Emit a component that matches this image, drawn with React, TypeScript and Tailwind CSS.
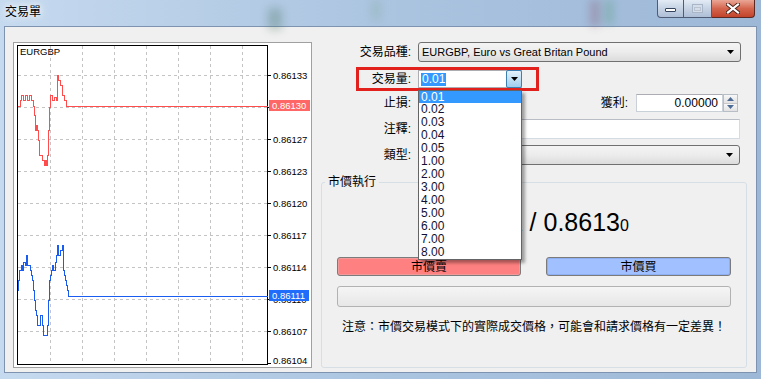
import React from 'react'

const font = "font-['Liberation_Sans','Noto_Sans_CJK_TC',sans-serif]"

const gridY = [75, 107, 139, 171, 203, 235, 267, 299, 331]
const gridX = [50, 82, 114, 146, 178, 210, 242]

const axisLabels = [
  { y: 75, t: '0.86133' },
  { y: 139, t: '0.86127' },
  { y: 171, t: '0.86123' },
  { y: 203, t: '0.86120' },
  { y: 235, t: '0.86117' },
  { y: 267, t: '0.86114' },
  { y: 299, t: '0.86110' },
  { y: 331, t: '0.86107' },
]

const askPath =
  'M17 106 H20 V100 H21 V95 H23 V100 H25 V95 H27 V100 H29 V95 H31 V100 H33 V106 H34 V115 H35 V130 H36 V125 H37 V130 H38 V140 H39 V155 H42 V160 H44 V165 H45 V160 H46 V165 H47 V155 H48 V130 H49 V107 H50 V95 H52 V100 H54 V97 H56 V100 H57 V75 H58 V80 H60 V85 H62 V95 H64 V100 H66 V106 H267'

const bidPath =
  'M17 290 H18 V280 H19 V270 H21 V265 H22 V270 H23 V262 H25 V265 H26 V255 H27 V265 H30 V270 H31 V275 H32 V280 H33 V290 H34 V300 H35 V310 H36 V315 H37 V325 H40 V315 H42 V325 H43 V335 H47 V325 H48 V300 H49 V280 H50 V275 H51 V270 H52 V265 H53 V270 H55 V262 H56 V255 H57 V245 H58 V255 H60 V250 H62 V245 H63 V270 H64 V275 H65 V280 H66 V285 H67 V290 H68 V296 H267'

const lots = ['0.01', '0.02', '0.03', '0.04', '0.05', '1.00', '2.00', '3.00', '4.00', '5.00', '6.00', '7.00', '8.00']

const Arrow = () => (
  <svg width="7" height="4" viewBox="0 0 7 4">
    <path d="M0 0h7L3.5 4z" fill="#000" />
  </svg>
)

const Chart = () => (
  <div className="mt-[15px] ml-[8px] w-[299px] h-[326px] border border-[#a0a0a0] bg-white shrink-0">
    <svg width={297} height={324} viewBox="14 43 297 324" fontFamily="Liberation Sans, sans-serif">
      <g shapeRendering="crispEdges">
        {gridY.map((y) => (
          <line key={'h' + y} x1={18} x2={267} y1={y + 0.5} y2={y + 0.5} stroke="#c4c4c4" strokeDasharray="3 3" />
        ))}
        {gridX.map((x) => (
          <line key={'v' + x} x1={x + 0.5} x2={x + 0.5} y1={46} y2={364} stroke="#c4c4c4" strokeDasharray="3 3" />
        ))}
        <rect x={17.5} y={45.5} width={250} height={319} fill="none" stroke="#000" />
        {[...gridY, 363].map((y) => (
          <line key={'t' + y} x1={267} x2={271} y1={y + 0.5} y2={y + 0.5} stroke="#000" />
        ))}
      </g>
      <text x={20} y={55} fontSize={9.5} fill="#000">EURGBP</text>
      {axisLabels.map((l) => (
        <text key={l.t} x={273} y={l.y + 4} fontSize={9.5} fill="#000">{l.t}</text>
      ))}
      <text x={273} y={364} fontSize={9.5} fill="#000">0.86104</text>
      <g transform="translate(0.5 0.5)" shapeRendering="crispEdges" fill="none" strokeWidth={1}>
        <path d={askPath} stroke="#ff4d4d" />
        <path d={bidPath} stroke="#1a5cf0" />
      </g>
      <rect x={269} y={100} width={41} height={11} fill="#ff6666" />
      <text x={272} y={109} fontSize={9.5} fill="#fff">0.86130</text>
      <rect x={269} y={290} width={40} height={11} fill="#1f6dfa" />
      <text x={272} y={299} fontSize={9.5} fill="#fff">0.86111</text>
    </svg>
  </div>
)

const Label = ({ children, className }: { children: React.ReactNode; className: string }) => (
  <div className={'text-right text-[12px] leading-[16px] shrink-0 ' + className}>{children}</div>
)

export default function App() {
  return (
    <div className={`w-[761px] h-[379px] overflow-hidden relative flex flex-col bg-gradient-to-r from-[#c6daef] via-[#abc4e0] to-[#9db8d7] text-black ${font}`}>
      {/* blurred desktop behind the glass */}
      <div className="absolute left-[268px] top-[8px] w-[14px] h-[22px] bg-[#3f6a52] opacity-30 blur-[5px]" />
      <div className="absolute left-[372px] top-[0px] w-[8px] h-[20px] bg-[#6fa07a] opacity-25 blur-[4px]" />
      <div className="absolute left-[590px] top-[0px] w-[10px] h-[26px] bg-[#8a5a70] opacity-35 blur-[4px]" />
      <div className="absolute left-[605px] top-[0px] w-[8px] h-[24px] bg-[#4f9a70] opacity-35 blur-[4px]" />

      {/* title bar */}
      <div className="h-[26px] flex items-start justify-between relative shrink-0">
        <span className="mt-[4px] ml-[5px] text-[12px] leading-[16px] [text-shadow:0_0_6px_#ffffff,0_0_10px_#ffffff]">交易單</span>
        <div className="flex mr-[6px]">
          <div className="w-[27px] h-[18px] rounded-bl-[4px] border border-t-0 border-[#4e5d75] bg-gradient-to-b from-[#e3ebf5] via-[#c6d3e4] to-[#aebfd6] flex items-center justify-center">
            <div className="w-[11px] h-[4px] mt-[3px] bg-white border border-[#34445c] rounded-[1px]" />
          </div>
          <div className="w-[28px] h-[18px] border-b border-r border-[#4e5d75] bg-gradient-to-b from-[#e3ebf5] via-[#c6d3e4] to-[#aebfd6] flex items-center justify-center">
            <div className="w-[11px] h-[9px] border border-[#a9b6c8] bg-[#d5dde8] flex items-center justify-center">
              <div className="w-[7px] h-[4px] border border-[#b9c4d3]" />
            </div>
          </div>
          <div className="w-[43px] h-[18px] rounded-br-[4px] border border-t-0 border-l-0 border-[#5a2a22] bg-gradient-to-b from-[#e9a696] via-[#d4654d] to-[#c2432b] flex items-center justify-center">
            <svg width="14" height="11" viewBox="0 0 14 11">
              <path d="M2 1.5L12 9.5M12 1.5L2 9.5" stroke="#4a2018" strokeWidth="4" strokeLinecap="square" />
              <path d="M2 1.5L12 9.5M12 1.5L2 9.5" stroke="#ffffff" strokeWidth="2.2" strokeLinecap="square" />
            </svg>
          </div>
        </div>
      </div>

      {/* client area */}
      <div className="mx-[4px] mb-[6px] flex-1 bg-[#f0f0f0] border border-[#7d93b0] flex items-start">
        <Chart />

        <div className="ml-[9px] mt-[15px] w-[426px] flex flex-col">
          {/* symbol */}
          <div className="h-[20px] flex items-center">
            <Label className="w-[90px]">交易品種:</Label>
            <div className="ml-[7px] w-[323px] h-[20px] rounded-[3px] border border-[#707070] bg-gradient-to-b from-[#f4f4f4] via-[#ececec] to-[#dcdcdc] flex items-center justify-between pl-[3px] pr-[6px]">
              <span className="text-[11px] leading-[14px]">EURGBP, Euro vs Great Britan Pound</span>
              <Arrow />
            </div>
          </div>

          {/* volume, highlighted */}
          <div className="mt-[5px] ml-[35px] w-[183px] h-[24px] border-[3px] border-[#e3211c] flex items-center relative">
            <Label className="w-[52px]">交易量:</Label>
            <div className="ml-[7px] w-[104px] h-[18px] bg-white border border-[#abadb3] border-r-0 flex items-center">
              <span className="ml-[2px] px-[1px] bg-[#3399ff] text-white text-[12px] leading-[13px]">0.01</span>
              <div className="ml-auto w-[16px] h-[18px] border border-[#3c7fb1] rounded-[2px] bg-gradient-to-b from-[#e4f2fc] via-[#c2e0f5] to-[#9fcdee] flex items-center justify-center">
                <Arrow />
              </div>
            </div>
            {/* open drop list */}
            <div className="absolute left-[59px] top-[20px] w-[104px] bg-white border border-[#646464] shadow-[3px_3px_3px_rgba(0,0,0,0.35)] z-10 flex flex-col">
              {lots.map((v, i) => (
                <div
                  key={v}
                  className={
                    i === 0
                      ? 'h-[12px] pl-[2px] bg-[#3399ff] text-white text-[12px] leading-[12px]'
                      : 'h-[13px] pl-[2px] text-[#111133] text-[12px] leading-[13px]'
                  }
                >
                  {v}
                </div>
              ))}
            </div>
          </div>

          {/* SL / TP */}
          <div className="mt-[3px] h-[18px] flex items-center">
            <Label className="w-[90px]">止損:</Label>
            <div className="ml-[7px] w-[100px] h-[18px] bg-white border border-[#c9d0d8] border-t-[#abadb3]" />
            <Label className="w-[110px]">獲利:</Label>
            <div className="ml-[8px] w-[87px] h-[18px] bg-white border border-[#c9d0d8] border-t-[#abadb3] flex items-center justify-end pr-[4px]">
              <span className="text-[12px] leading-[14px]">0.00000</span>
            </div>
            <div className="w-[15px] h-[18px] flex flex-col border border-[#b8bec8] bg-white">
              <div className="flex-1 flex items-center justify-center bg-gradient-to-b from-[#f7f7f7] to-[#e2e2e2] border-b border-[#c8c8c8]">
                <svg width="7" height="4" viewBox="0 0 7 4"><path d="M0 4h7L3.5 0z" fill="#4d6b96" /></svg>
              </div>
              <div className="flex-1 flex items-center justify-center bg-gradient-to-b from-[#f7f7f7] to-[#e2e2e2]">
                <svg width="7" height="4" viewBox="0 0 7 4"><path d="M0 0h7L3.5 4z" fill="#4d6b96" /></svg>
              </div>
            </div>
          </div>

          {/* comment */}
          <div className="mt-[7px] h-[20px] flex items-center">
            <Label className="w-[90px]">注釋:</Label>
            <div className="ml-[7px] w-[322px] h-[20px] bg-white border border-[#d5dbe3] border-t-[#b9bec6]" />
          </div>

          {/* type */}
          <div className="mt-[6px] h-[20px] flex items-center">
            <Label className="w-[90px]">類型:</Label>
            <div className="ml-[7px] w-[322px] h-[20px] rounded-[3px] border border-[#707070] bg-gradient-to-b from-[#f4f4f4] via-[#ececec] to-[#dcdcdc] flex items-center justify-end pr-[6px]">
              <Arrow />
            </div>
          </div>

          {/* market execution group */}
          <fieldset className="mt-[10px] h-[193px] border border-[#d5dfe5] rounded-[3px]">
            <legend className="ml-[3px] px-[3px] text-[12px] leading-[14px]">市價執行</legend>
            <div className="px-[15px] flex flex-col">
              <div className="mt-[21px] h-[25px] flex items-baseline justify-center text-[25px] leading-[25px]">
                <span>0.8611</span>
                <span className="text-[16px]">1</span>
                <span className="whitespace-pre"> / </span>
                <span>0.8613</span>
                <span className="text-[16px]">0</span>
              </div>
              <div className="mt-[22px] flex justify-between">
                <div className="w-[184px] h-[19px] rounded-[3px] border border-[#7b7b7b] bg-[#ff8080] shadow-[inset_0_0_0_1px_#f29a9a] flex items-center justify-center text-[12px] leading-[14px]">
                  市價賣
                </div>
                <div className="w-[185px] h-[19px] rounded-[3px] border border-[#7b7b7b] bg-[#a0c0ff] shadow-[inset_0_0_0_1px_#8eb0f2] flex items-center justify-center text-[12px] leading-[14px]">
                  市價買
                </div>
              </div>
              <div className="mt-[10px] h-[21px] rounded-[3px] border border-[#b2b2b2] bg-gradient-to-b from-[#f5f5f5] to-[#e7e7e7]" />
              <div className="mt-[12px] text-center text-[12px] leading-[16px]">
                注意：市價交易模式下的實際成交價格，可能會和請求價格有一定差異！
              </div>
            </div>
          </fieldset>
        </div>
      </div>
    </div>
  )
}
